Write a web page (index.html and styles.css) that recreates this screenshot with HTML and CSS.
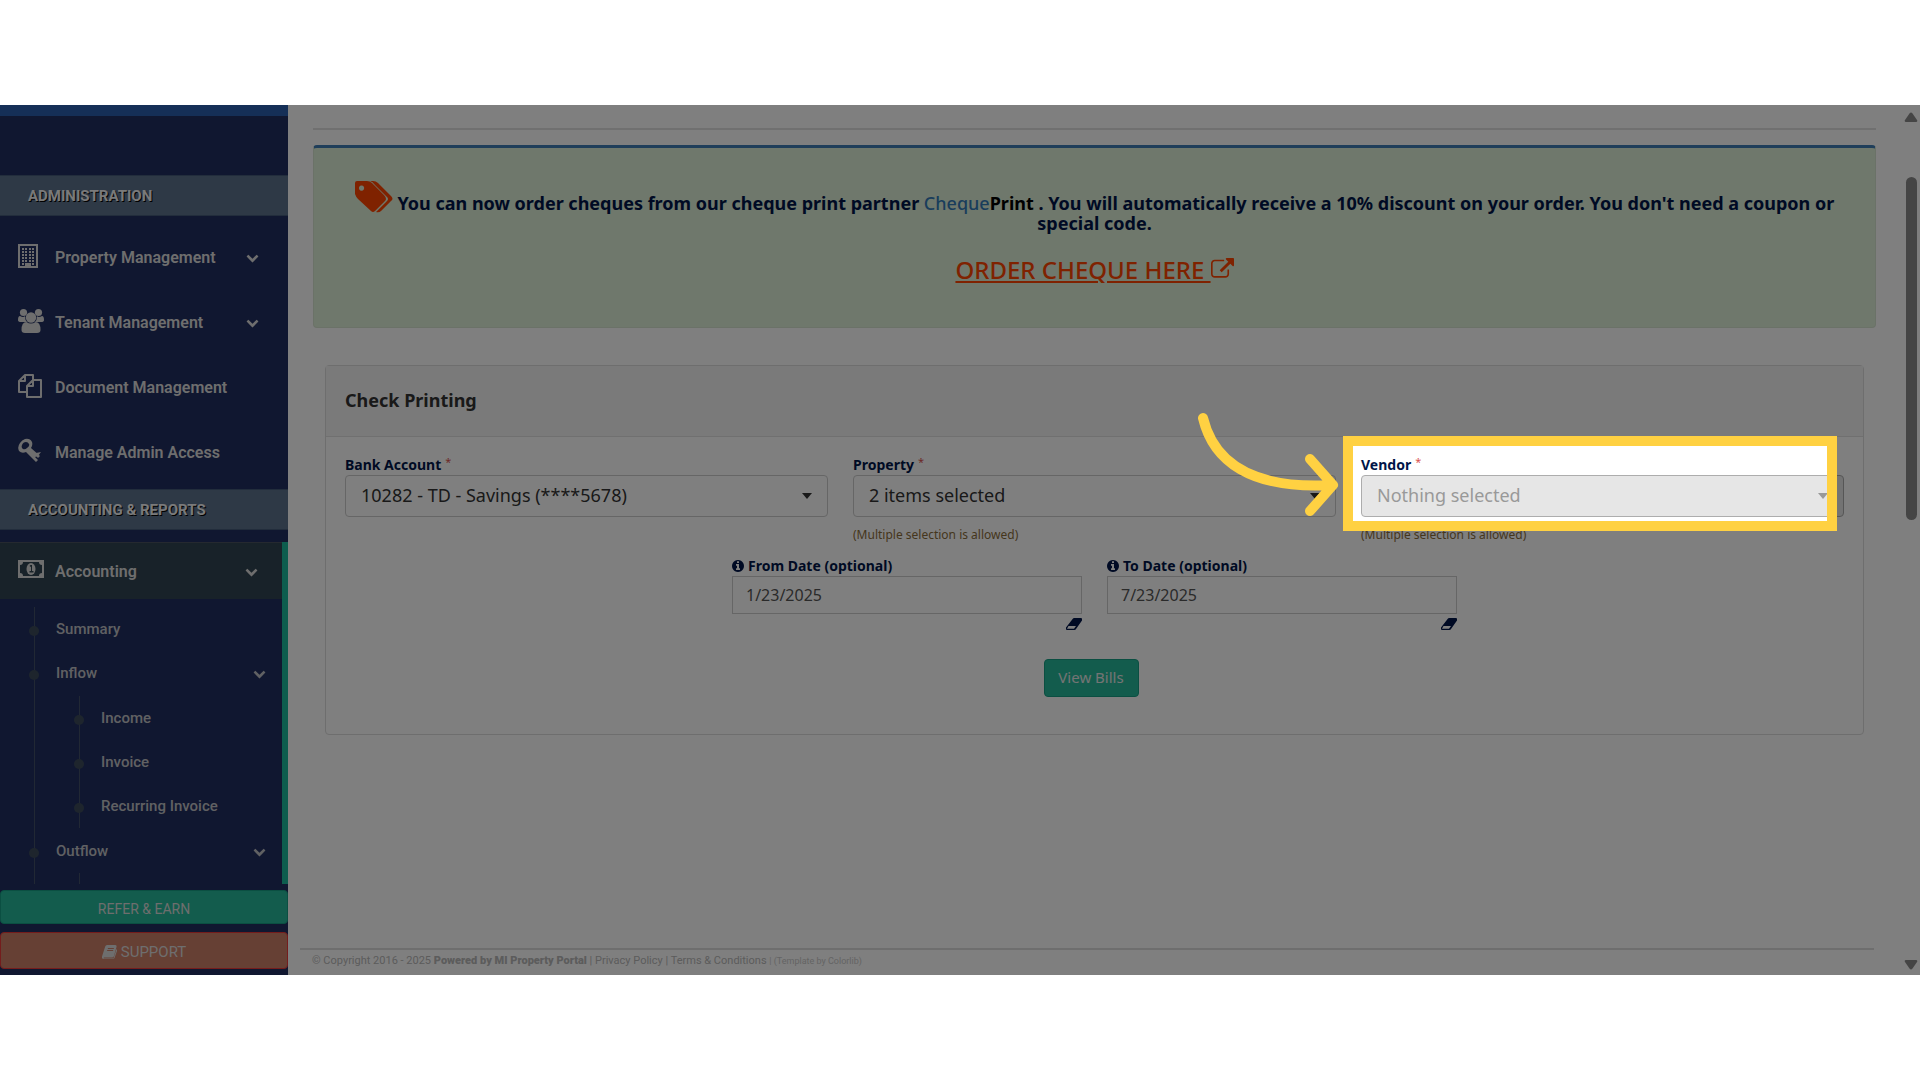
FILE: index.html
```html
<!DOCTYPE html>
<html lang="en">
<head>
<meta charset="utf-8">
<title>Check Printing</title>
<link rel="stylesheet" href="styles.css">
</head>
<body>
<svg class="defs" aria-hidden="true">
  <symbol id="chevron" viewBox="0 0 1792 1792"><path d="M1683 808l-742 741q-19 19-45 19t-45-19l-742-741q-19-19-19-45.500t19-45.500l166-165q19-19 45-19t45 19l531 531 531-531q19-19 45-19t45 19l166 165q19 19 19 45.500t-19 45.500z"/></symbol>
  <symbol id="info" viewBox="128 128 1536 1536"><path d="M1152 1376v-160q0-14-9-23t-23-9h-96v-512q0-14-9-23t-23-9h-320q-14 0-23 9t-9 23v160q0 14 9 23t23 9h96v320h-96q-14 0-23 9t-9 23v160q0 14 9 23t23 9h448q14 0 23-9t9-23zm-128-896v-160q0-14-9-23t-23-9h-192q-14 0-23 9t-9 23v160q0 14 9 23t23 9h192q14 0 23-9t9-23zm640 416q0 209-103 385.500t-279.500 279.500-385.500 103-385.500-103-279.500-279.500-103-385.500 103-385.500 279.500-279.500 385.500-103 385.500 103 279.500 279.500 103 385.500z"/></symbol>
  <symbol id="eraser" viewBox="0 0 16 12"><path fill-rule="evenodd" d="M7 .5Q7.400 0 8 0h7Q16 0 16 1v1.500L10 11Q9.500 12 8.500 12H1Q0 12 0 11V9.500zM2.500 8L1 10.800h7L10 8z"/></symbol>
  <symbol id="caret" viewBox="0 0 10 6"><path d="M0 0h10L5 6z"/></symbol>
</svg>
<div class="stage">
  <aside class="sidebar">
    <nav class="menu">
      <h3 class="section">ADMINISTRATION</h3>
      <ul class="items">
        <li><a class="item" href="#">
          <svg class="icon" viewBox="0 0 26 26"><path fill-rule="evenodd" d="M0 1h20v24H0zM2 3v20h5v-3h6v3h5V3z"/><path d="M4 5h2v2H4zm3 0h2v2H7zm4 0h2v2h-2zm3 0h2v2h-2zM4 8h2v2H4zm3 0h2v2H7zm4 0h2v2h-2zm3 0h2v2h-2zM4 11h2v2H4zm3 0h2v2H7zm4 0h2v2h-2zm3 0h2v2h-2zM4 14h2v2H4zm3 0h2v2H7zm4 0h2v2h-2zm3 0h2v2h-2zM4 17h2v2H4zm3 0h2v2H7zm4 0h2v2h-2zm3 0h2v2h-2zM4 20h2v2H4zm10 0h2v2h-2z"/></svg>
          <span>Property Management</span><svg class="chev"><use href="#chevron"/></svg></a></li>
        <li><a class="item" href="#">
          <svg class="icon" viewBox="0 0 26 26"><circle cx="5.500" cy="4.500" r="3.600"/><circle cx="20.500" cy="4.500" r="3.600"/><path d="M2 8q3.500 2 5 0 0 4 2 6H3q-3 0-3-2 0-4 2-4zM24 8q-3.500 2-5 0 0 4-2 6h6q3 0 3-2 0-4-2-4z"/><circle cx="13" cy="9.500" r="5.200"/><path d="M8.500 14q4.500 3 9 0 5 0 5 8 0 3-3.500 3H7q-3.500 0-3.500-3 0-8 5-8z"/></svg>
          <span>Tenant Management</span><svg class="chev"><use href="#chevron"/></svg></a></li>
        <li><a class="item" href="#">
          <svg class="icon" viewBox="0 0 26 26"><path class="line" d="M8 19H1V8l6-6h8v5M7 2v6H1M9 24V13l6-6h8v17zM15 7v6H9"/></svg>
          <span>Document Management</span></a></li>
        <li><a class="item" href="#">
          <svg class="icon" viewBox="0 0 26 26"><path fill-rule="evenodd" d="M7 1q5-1 7 3 1 3-1 6l9 8-2 2-2-2-1 1 3 3-2 2-10-10q-4 2-7-1-2-4 1-8 2-3 5-4zm1 3Q5 4 4 7q-1 3 1 4 2 1 4-1 3-2 2-4-1-2-3-2z"/><path d="M18 15l5-1-3 4-3 1z"/></svg>
          <span>Manage Admin Access</span></a></li>
      </ul>
      <h3 class="section">ACCOUNTING &amp; REPORTS</h3>
      <div class="open">
        <a class="item active" href="#">
          <svg class="icon" viewBox="0 0 26 26"><path fill-rule="evenodd" d="M0 4h26v18H0zM5 6q0 3-3 3v8q3 0 3 3h16q0-3 3-3V9q-3 0-3-3z"/><ellipse cx="13" cy="13" rx="4.500" ry="6"/><path class="cut" d="M11.500 10l1-1h1.500v6h1.500v1.500h-4V15H13v-4z"/></svg>
          <span>Accounting</span><svg class="chev"><use href="#chevron"/></svg></a>
        <ul class="tree">
          <li><a href="#">Summary</a></li>
          <li><a href="#">Inflow<svg class="chev"><use href="#chevron"/></svg></a>
            <ul class="branch">
              <li><a href="#">Income</a></li>
              <li><a href="#">Invoice</a></li>
              <li><a href="#">Recurring Invoice</a></li>
            </ul></li>
          <li><a href="#">Outflow<svg class="chev"><use href="#chevron"/></svg></a>
            <ul class="branch stub"></ul></li>
        </ul>
      </div>
    </nav>
    <div class="actions">
      <button class="btn refer" type="button">REFER &amp; EARN</button>
      <button class="btn support" type="button"><svg viewBox="0 0 15 14"><path fill-rule="evenodd" d="M5 0h8q2 0 1.500 2L12 11q-.5 1.500-2 1.500H2q-.7.800 0 1h9.500L14.500 4q1 1 .300 2.500L12.500 13q-.5 1-1.500 1H2q-2.500 0-2-2.500L3.200 1.500Q3.700 0 5 0zm1 3l-.3 1h6l.3-1zm-.7 2L5 6h6l.3-1z"/></svg>SUPPORT</button>
    </div>
  </aside>

  <main class="main">
    <section class="promo">
      <p class="offer"><svg class="tags" viewBox="0 0 38 32"><path fill-rule="evenodd" d="M0 2Q0 0 2 0h10q3 0 5 2l12 12q2 2 2 4 0 1-1 2L20 30q-2 2-4 0L3 18q-2-2-3-5zM6.500 4.500a2.600 2.600 0 1 0 .1 0z"/><path d="M15 0h3q3 0 5 2l13 13q3 3 0 5L26 30q-2 2-5 1L32 20q2-2 0-4L19 3q-1-2-4-3z"/></svg> You can now order cheques from our cheque print partner <a href="#" class="partner">Cheque<b>Print</b></a> . You will automatically receive a 10% discount on your order. You don't need a coupon or special code.</p>
      <a class="order" href="#">ORDER CHEQUE HERE <svg viewBox="0 0 1792 1792"><path d="M1408 928v320q0 119-84.500 203.500t-203.500 84.500h-832q-119 0-203.500-84.500t-84.500-203.500v-832q0-119 84.500-203.500t203.500-84.500h704q14 0 23 9t9 23v64q0 14-9 23t-23 9h-704q-66 0-113 47t-47 113v832q0 66 47 113t113 47h832q66 0 113-47t47-113v-320q0-14 9-23t23-9h64q14 0 23 9t9 23zm384-864v512q0 26-19 45t-45 19-45-19l-176-176-652 652q-10 10-23 10t-23-10l-114-114q-10-10-10-23t10-23l652-652-176-176q-19-19-19-45t19-45 45-19h512q26 0 45 19t19 45z"/></svg></a>
    </section>

    <section class="panel">
      <h2 class="panel-title">Check Printing</h2>
      <form class="panel-body">
        <div class="fields">
          <div class="field">
            <label for="bank">Bank Account <sup>*</sup></label>
            <div class="pick"><select id="bank"><option>10282 - TD - Savings (****5678)</option></select><svg><use href="#caret"/></svg></div>
          </div>
          <div class="field">
            <label for="property">Property <sup>*</sup></label>
            <div class="pick"><select id="property"><option>2 items selected</option></select><svg><use href="#caret"/></svg></div>
            <small>(Multiple selection is allowed)</small>
          </div>
          <div class="field">
            <label for="vendor">Vendor <sup>*</sup></label>
            <div class="pick off"><select id="vendor" disabled><option>Nothing selected</option></select><svg><use href="#caret"/></svg></div>
            <small>(Multiple selection is allowed)</small>
            <div class="spotlight">
              <svg class="arrow" viewBox="0 0 150 110"><path d="M10 8C20 50 56 80 140 75M117 49l23 26-23 26"/></svg>
            </div>
          </div>
        </div>
        <div class="dates">
          <div class="date">
            <label for="from"><svg class="info"><use href="#info"/></svg>From Date (optional)</label>
            <input id="from" type="text" value="1/23/2025">
            <svg class="eraser"><use href="#eraser"/></svg>
          </div>
          <div class="date">
            <label for="to"><svg class="info"><use href="#info"/></svg>To Date (optional)</label>
            <input id="to" type="text" value="7/23/2025">
            <svg class="eraser"><use href="#eraser"/></svg>
          </div>
        </div>
        <button class="btn view" type="button">View Bills</button>
      </form>
    </section>

    <footer class="footer">© Copyright 2016 - 2025 <b>Powered by MI Property Portal</b> | <a href="#">Privacy Policy</a> | <a href="#">Terms &amp; Conditions</a> <span>| (Template by <i>Colorlib</i>)</span></footer>
  </main>

  <div class="scroll" aria-hidden="true">
    <svg viewBox="0 0 14 10"><path d="M5.500 1.500q1.500-2 3 0L13 8q1 2-1 2H2Q0 10 1 8z"/></svg>
    <div class="thumb"></div>
    <svg class="down" viewBox="0 0 14 10"><path d="M5.500 8.500q1.500 2 3 0L13 2q1-2-1-2H2Q0 0 1 2z"/></svg>
  </div>
</div>
</body>
</html>
```
FILE: styles.css
```css
* { box-sizing: border-box; }
body {
  margin: 0;
  min-height: 100vh;
  padding: 105px 0;
  display: flex;
  background: #fff;
  color: #001548;
  font-family: "Noto Sans", sans-serif;
}
ul { list-style: none; margin: 0; padding: 0; }
a { color: inherit; text-decoration: none; }
svg { fill: currentColor; flex: none; }
.defs { display: none; }

.stage {
  position: relative;
  flex: 1;
  display: grid;
  grid-template-columns: 288px 1fr 18px;
  overflow: hidden;
}

/* Sidebar */
.sidebar {
  display: flex;
  flex-direction: column;
  background: #202e60;
  border-top: 11px solid #2a5eae;
  color: #dcdcdc;
  font-family: Roboto, sans-serif;
  font-weight: 500;
}
.menu { padding-top: 59px; }
.section {
  margin: 0;
  padding: 0 28px;
  height: 41px;
  line-height: 40px;
  background: #5c728c;
  border: solid #455a78;
  border-width: 1px 0;
  color: #f4f4f4;
  font-size: 15px;
  font-weight: 700;
  text-shadow: 1px 1px #000;
}
.items { padding: 9px 0 4px; }
.item {
  display: flex;
  align-items: center;
  height: 65px;
  padding: 0 29px 0 18px;
  font-size: 16px;
  font-weight: 600;
}
.icon { width: 26px; height: 26px; margin: 0 11px 4px 0; }
.item span { flex: 1; }
.chev { width: 13px; height: 13px; }
.line { fill: none; stroke: currentColor; stroke-width: 2; stroke-linejoin: round; }
.cut { fill: #304450; }
.open { margin-top: 12px; border-right: 6px solid #1abb9c; }
.active {
  height: 57px;
  padding-right: 24px;
  background: #304452;
  border-top: 1px solid #4a5260;
}
.tree { padding-top: 8px; font-size: 15px; color: #c0c2c6; }
.tree a { display: flex; align-items: center; justify-content: space-between; height: 44px; padding: 0 16px 0 56px; }
.tree li { position: relative; }
.tree > li::before, .branch > li::before {
  content: "";
  position: absolute;
  left: 34px;
  top: 0;
  bottom: 0;
  border-left: 1px solid #425068;
}
.tree li::after {
  content: "";
  position: absolute;
  left: 29px;
  top: 19px;
  width: 10px;
  height: 10px;
  border-radius: 50%;
  background: #3c4b5a;
}
.branch { margin-left: 45px; padding: 1px 0; }
.stub { height: 11px; width: 35px; border-right: 1px solid #425068; }
.actions { margin-top: auto; display: grid; gap: 8px; padding-bottom: 6px; }
.btn {
  border: 1px solid #169f85;
  border-radius: 4px;
  background: #26b99a;
  color: #fff;
  font: 400 14px Roboto, sans-serif;
}
.refer { height: 34px; padding: 4px 0 0; color: #dcdcdc; }
.support {
  height: 37px;
  display: flex;
  align-items: center;
  justify-content: center;
  gap: 4px;
  padding: 2px 0 0;
  background: #cc8069;
  border-color: #e83838;
  color: #dcdcdc;
  font-size: 15px;
}
.support svg { width: 15px; height: 14px; }

/* Main column */
.main { display: flex; flex-direction: column; padding: 23px 26px 0 12px; }
.promo {
  position: relative;
  height: 200px;
  margin-left: 13px;
  padding: 51px 30px 0;
  border-top: 2px solid #e0e0e0;
  text-align: center;
}
.promo::before {
  content: "";
  position: absolute;
  z-index: -1;
  inset: 15px 0 0;
  border: 1px solid #d6e4d0;
  border-top: 3px solid #3e7cb4;
  border-radius: 4px;
  background: #dff0d8;
}
.offer { margin: 0; font-size: 18px; line-height: 20px; font-weight: 700; }
.tags { width: 38px; height: 32px; vertical-align: -3px; }
.tags { color: #ff4500; }
.partner { color: #337ab7; font-weight: 500; }
.partner b { color: #000; font-weight: 700; }
.order {
  display: inline-block;
  margin-top: 20px;
  color: #ff4500;
  font-size: 24px;
  font-weight: 500;
  line-height: 34px;
  text-decoration: underline;
}
.order svg { width: 23px; height: 23px; vertical-align: -2px; }

.panel { margin: 37px 12px 0 25px; border: 1px solid #dcdcdc; border-radius: 4px; }
.panel-title {
  margin: 0;
  padding: 0 19px;
  height: 71px;
  line-height: 68px;
  background: #f5f5f5;
  border-bottom: 1px solid #e0e0e0;
  color: #333;
  font-size: 18px;
  font-weight: 700;
}
.panel-body { padding: 18px 19px 37px; display: flex; flex-direction: column; align-items: center; }
.fields { width: 100%; display: grid; grid-template-columns: repeat(3, 1fr); gap: 25px; }
.field { position: relative; }
label { display: flex; align-items: center; height: 20px; font-size: 14px; line-height: 20px; font-weight: 700; }
sup { margin: -8px 0 0 4px; color: #d9534f; font-size: 11px; line-height: 11px; font-weight: 400; }
.pick { position: relative; }
select {
  display: block;
  width: 100%;
  height: 42px;
  padding: 0 15px 2px;
  appearance: none;
  background: #fff;
  border: 1px solid #ccc;
  border-radius: 4px;
  color: #333;
  font: 400 18px "Noto Sans", sans-serif;
  opacity: 1;
}
.pick svg { position: absolute; right: 16px; top: 18px; width: 10px; height: 6px; color: #333; }
.off select { background: #e6e6e6; border-color: #adadad; color: #999; }
.off svg { color: #999; }
small { display: block; margin-top: 8px; font-size: 12px; line-height: 20px; color: #8a6d3b; }
.spotlight {
  position: absolute;
  z-index: 5;
  inset: -19px 7px auto -18px;
  height: 95px;
  border: 10px solid #ffd142;
  box-shadow: 0 0 0 4000px rgba(0, 0, 0, .5);
  pointer-events: none;
}
.arrow {
  position: absolute;
  left: -160px;
  top: -36px;
  width: 150px;
  height: 110px;
  fill: none;
  stroke: #ffd142;
  stroke-width: 10;
  stroke-linecap: round;
  stroke-linejoin: round;
}
.dates { display: grid; grid-template-columns: 350px 350px; gap: 25px; margin-top: 11px; }
.date { display: grid; }
.info { width: 12px; height: 12px; margin-right: 4px; }
input {
  height: 38px;
  padding: 0 13px;
  border: 1px solid #ccc;
  background: #fff;
  color: #555;
  font: 400 16px "Noto Sans", sans-serif;
}
.eraser { justify-self: end; width: 16px; height: 12px; margin-top: 4px; }
.view { margin: 29px 7px 0 0; width: 95px; height: 38px; font: 400 15px "Noto Sans", sans-serif; padding: 0 0 2px; color: #e8e8e8; }
.footer {
  height: 27px;
  margin: auto 2px 0 0;
  padding-left: 12px;
  border-top: 2px solid #dcdcdc;
  font: 11px/22px Roboto, sans-serif;
  color: #b8b8b8;
}
.footer b { font-weight: 900; }
.footer span { font-size: 9px; color: #c8c8c8; }
.footer i { font-size: 9px; font-style: normal; }
.scroll { display: flex; flex-direction: column; align-items: center; padding: 7px 0 5px 0; color: #8b8b8b; }
.scroll svg { width: 14px; height: 10px; }
.thumb { width: 11px; height: 343px; margin-top: 55px; border-radius: 6px; background: #8b8b8b; }
.scroll .down { margin-top: auto; }
```
